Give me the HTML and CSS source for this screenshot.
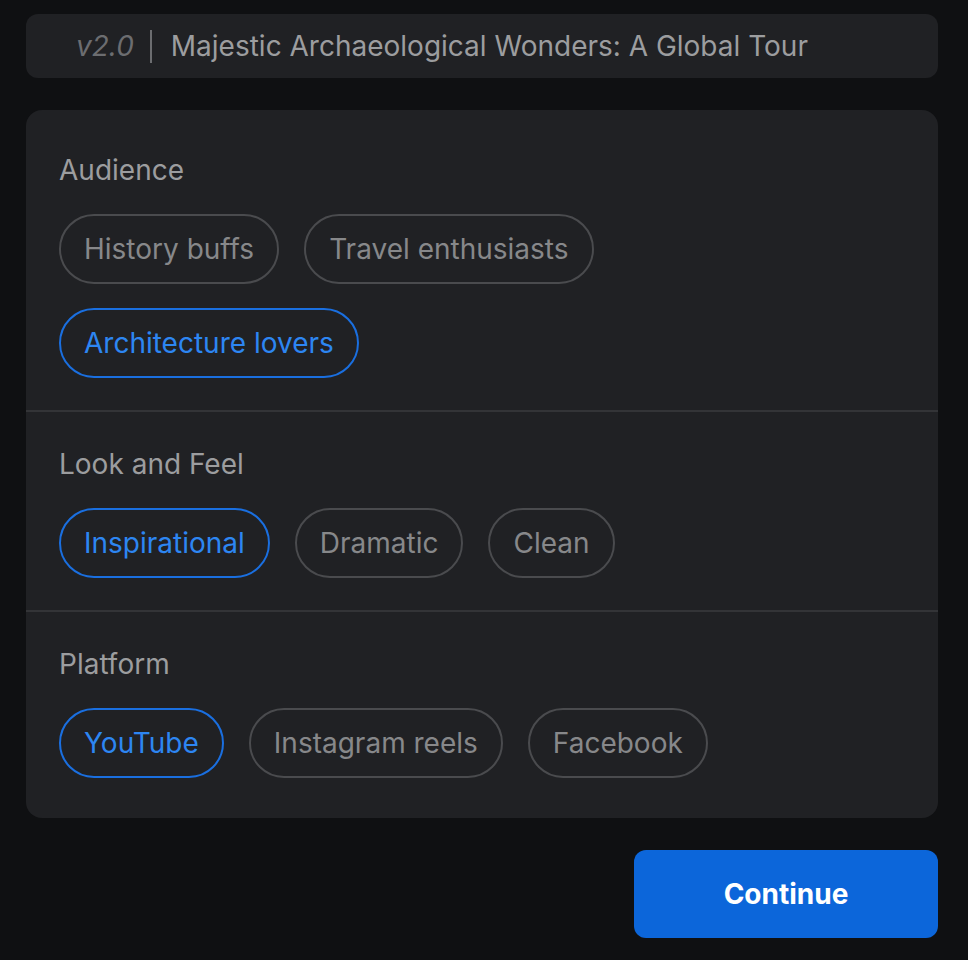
FILE: index.html
```html
<!DOCTYPE html>
<html>
<head>
<meta charset="utf-8">
<link rel="stylesheet" href="styles.css">
</head>
<body>
<div class="page">
  <div class="header">
    <span class="version">v2.0</span>
    <span class="sep"></span>
    <span class="title">Majestic Archaeological Wonders: A Global Tour</span>
  </div>
  <div class="card">
    <div class="section">
      <div class="label">Audience</div>
      <div class="chips">
        <span class="chip">History buffs</span>
        <span class="chip">Travel enthusiasts</span>
        <span class="chip active">Architecture lovers</span>
      </div>
    </div>
    <div class="section">
      <div class="label">Look and Feel</div>
      <div class="chips">
        <span class="chip active">Inspirational</span>
        <span class="chip">Dramatic</span>
        <span class="chip">Clean</span>
      </div>
    </div>
    <div class="section">
      <div class="label">Platform</div>
      <div class="chips">
        <span class="chip active">YouTube</span>
        <span class="chip">Instagram reels</span>
        <span class="chip">Facebook</span>
      </div>
    </div>
  </div>
  <div class="actions">
    <button class="continue">Continue</button>
  </div>
</div>
</body>
</html>
```

FILE: styles.css
```css
html, body {
  margin: 0;
  padding: 0;
  background: #0f1012;
}
body {
  font-family: Inter, "Noto Sans", sans-serif;
  color: #9a9b9d;
}
.page {
  padding: 14px 30px 0 26px;
  display: flex;
  flex-direction: column;
  gap: 32px;
}
.header {
  height: 64px;
  background: #202124;
  border-radius: 12px;
  display: flex;
  align-items: center;
  padding-left: 50px;
  box-sizing: border-box;
}
.version {
  font-style: italic;
  font-size: 28px;
  color: #6c6d70;
}
.sep {
  width: 2px;
  height: 33px;
  background: #6c6d70;
  margin: 0 19px 0 16px;
}
.title {
  font-size: 28px;
  color: #9c9d9f;
}
.card {
  background: #202124;
  border-radius: 16px;
  padding: 8px 0;
}
.section {
  padding: 32px 33px;
  border-top: 2px solid #333437;
}
.section:first-child {
  border-top: none;
}
.label {
  font-size: 28px;
  line-height: 40px;
  color: #9c9d9f;
  margin-bottom: 24px;
}
.chips {
  display: flex;
  flex-wrap: wrap;
  gap: 24px 25px;
}
.chip {
  height: 70px;
  box-sizing: border-box;
  border: 2px solid #4a4b4e;
  border-radius: 35px;
  padding: 0 23px;
  display: flex;
  align-items: center;
  font-size: 28px;
  color: #87888a;
}
.chip.active {
  border-color: #1a6fe0;
  color: #2d86f2;
}
.actions {
  display: flex;
  justify-content: flex-end;
}
.continue {
  width: 304px;
  height: 88px;
  border: none;
  border-radius: 12px;
  background: #0c66da;
  color: #ffffff;
  font-family: Inter, "Noto Sans", sans-serif;
  font-weight: 700;
  font-size: 28px;
}
```
